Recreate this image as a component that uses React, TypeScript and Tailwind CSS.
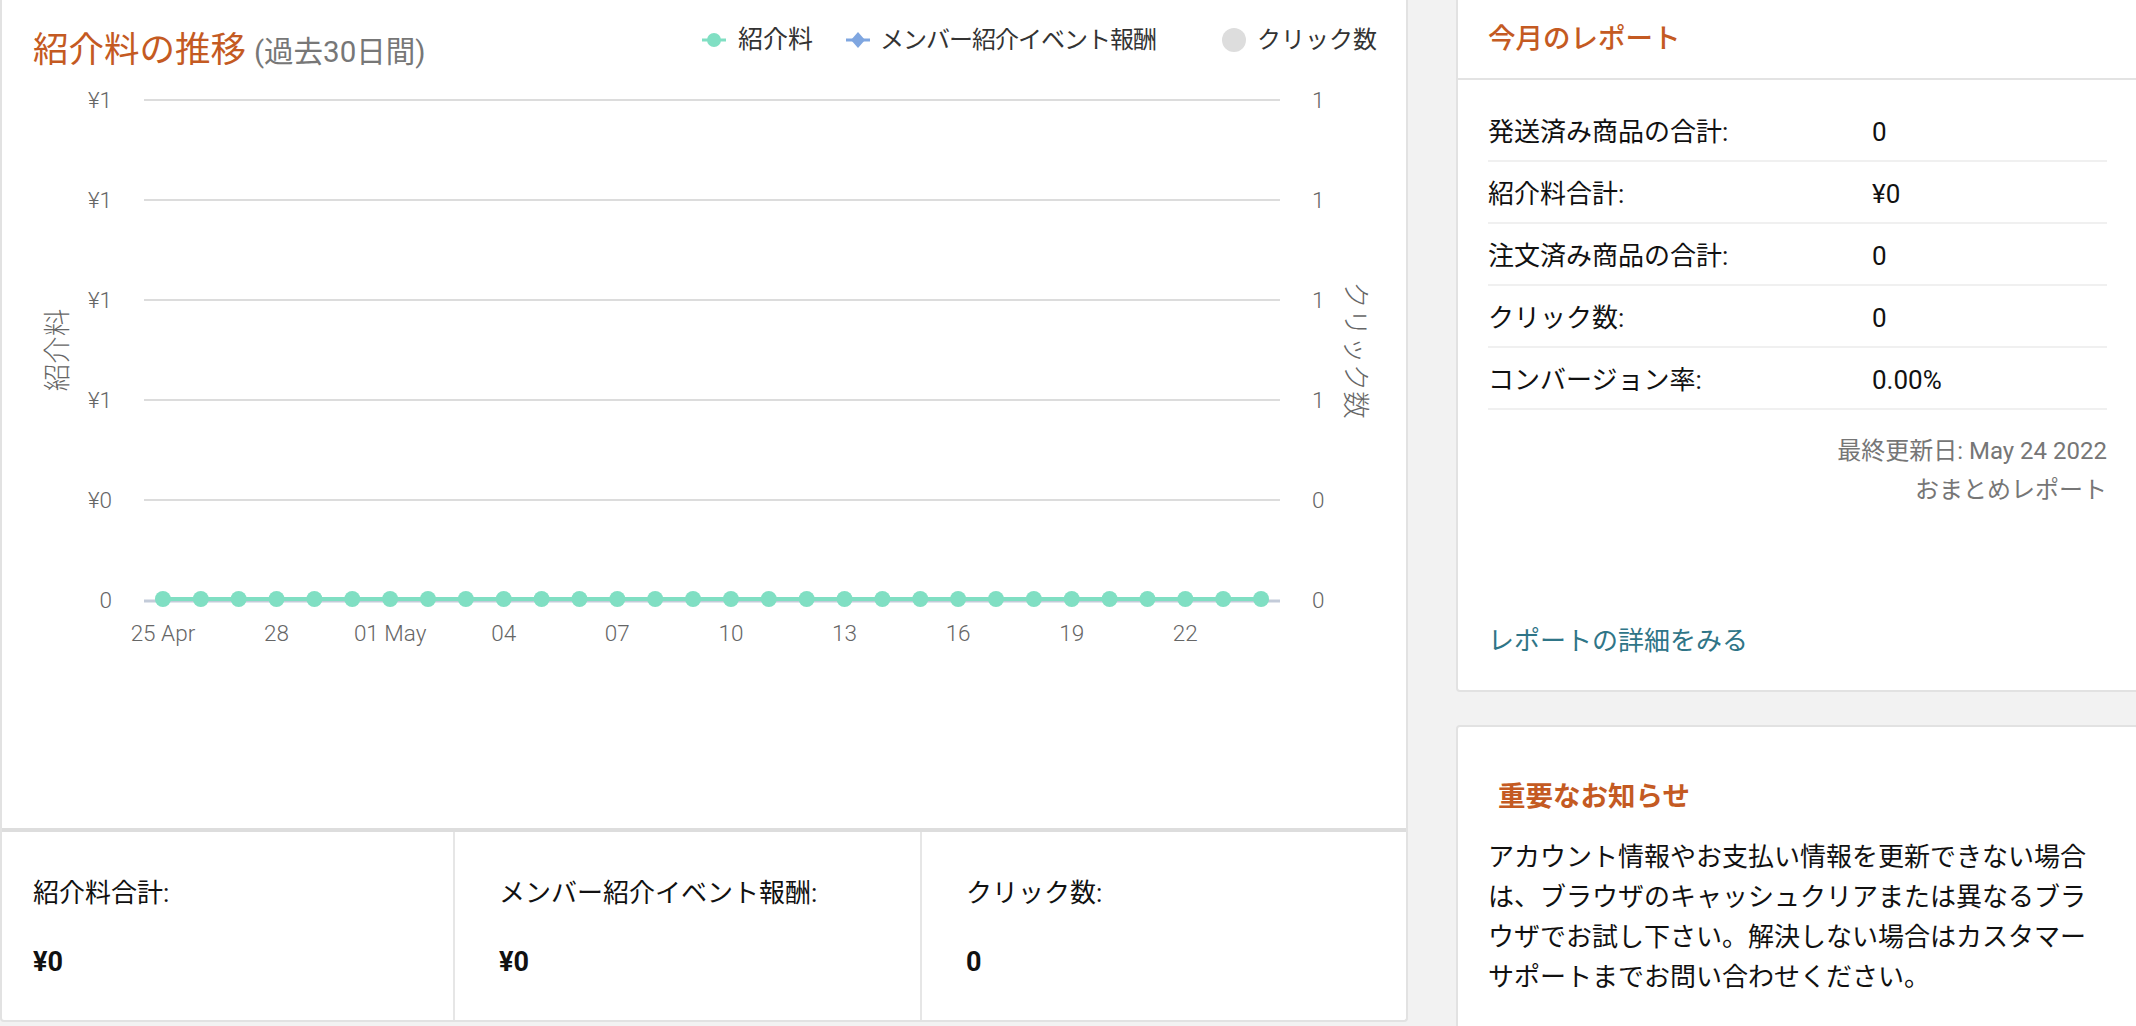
import React from "react";

const FONT = "font-['Roboto','Noto_Sans_CJK_JP',sans-serif]";

const PLOT_L = 144;
const PLOT_R = 1280;
const N = 30;
const CW = (PLOT_R - PLOT_L) / N;
const cx = (i: number) => PLOT_L + CW * (i + 0.5);

const xLabels: [number, string][] = [
  [0, "25 Apr"],
  [3, "28"],
  [6, "01 May"],
  [9, "04"],
  [12, "07"],
  [15, "10"],
  [18, "13"],
  [21, "16"],
  [24, "19"],
  [27, "22"],
];

const leftLabels: [number, string][] = [
  [100, "¥1"],
  [200, "¥1"],
  [300, "¥1"],
  [400, "¥1"],
  [500, "¥0"],
  [600, "0"],
];
const rightLabels: [number, string][] = [
  [100, "1"],
  [200, "1"],
  [300, "1"],
  [400, "1"],
  [500, "0"],
  [600, "0"],
];

function Chart() {
  const fontFamily = "Roboto, 'Noto Sans CJK JP', sans-serif";
  return (
    <svg width={1404} height={748} viewBox="2 80 1404 748" className="block">
      {[100, 200, 300, 400, 500].map((y) => (
        <line key={y} x1={PLOT_L} x2={PLOT_R} y1={y} y2={y} stroke="#dcdcdc" strokeWidth={2} />
      ))}
      <line x1={PLOT_L} x2={PLOT_R} y1={601} y2={601} stroke="#c3cbd9" strokeWidth={3} />
      {leftLabels.map(([y, t], i) => (
        <text
          key={"l" + i}
          x={112}
          y={y}
          textAnchor="end"
          dominantBaseline="central"
          fontSize={22.5}
          fontWeight={300}
          fill="#666"
          fontFamily={fontFamily}
        >
          {t}
        </text>
      ))}
      {rightLabels.map(([y, t], i) => (
        <text
          key={"r" + i}
          x={1312}
          y={y}
          textAnchor="start"
          dominantBaseline="central"
          fontSize={22.5}
          fontWeight={300}
          fill="#666"
          fontFamily={fontFamily}
        >
          {t}
        </text>
      ))}
      {xLabels.map(([i, t]) => (
        <text
          key={"x" + i}
          x={cx(i)}
          y={633}
          textAnchor="middle"
          dominantBaseline="central"
          fontSize={22.5}
          fontWeight={300}
          fill="#666"
          fontFamily={fontFamily}
        >
          {t}
        </text>
      ))}
      <text
        x={57}
        y={350}
        transform="rotate(-90 57 350)"
        textAnchor="middle"
        dominantBaseline="central"
        fontSize={27.5}
        fontWeight={300}
        fill="#666"
        fontFamily={fontFamily}
      >
        紹介料
      </text>
      <text
        x={1355}
        y={350}
        transform="rotate(90 1355 350)"
        textAnchor="middle"
        dominantBaseline="central"
        fontSize={27.5}
        fontWeight={300}
        fill="#666"
        fontFamily={fontFamily}
      >
        クリック数
      </text>
      <line x1={cx(0)} x2={cx(N - 1)} y1={599} y2={599} stroke="#80dfc3" strokeWidth={4} />
      {Array.from({ length: N }).map((_, i) => (
        <circle key={i} cx={cx(i)} cy={599} r={8} fill="#80dfc3" />
      ))}
    </svg>
  );
}

function LegendLine({ kind }: { kind: "circle" | "diamond" }) {
  const color = kind === "circle" ? "#80dfc3" : "#7fa6e0";
  return (
    <svg width={24} height={18} viewBox="0 0 24 18" className="shrink-0 block">
      <line x1={0} x2={24} y1={9} y2={9} stroke={color} strokeWidth={3} />
      {kind === "circle" ? (
        <circle cx={12} cy={9} r={7} fill={color} />
      ) : (
        <polygon points="12,1 19,9 12,17 5,9" fill={color} />
      )}
    </svg>
  );
}

export default function App() {
  const rows: [string, string][] = [
    ["発送済み商品の合計:", "0"],
    ["紹介料合計:", "¥0"],
    ["注文済み商品の合計:", "0"],
    ["クリック数:", "0"],
    ["コンバージョン率:", "0.00%"],
  ];
  return (
    <div className={`w-[2136px] h-[1026px] overflow-hidden bg-[#f2f2f2] flex items-start gap-[48px] ${FONT}`}>
      {/* Left card */}
      <div className="w-[1408px] shrink-0 h-[1022px] bg-white border-x-2 border-b-2 border-[#e2e2e2] rounded-b-[4px] flex flex-col">
        <div className="h-[80px] flex justify-between items-start pl-[31px] pr-[29px]">
          <div className="pt-[30px] leading-[40px] flex items-baseline gap-[8px]">
            <span className="text-[35.5px] text-[#c45a22]">紹介料の推移</span>
            <span className="text-[29.5px] text-[#777]">(過去30日間)</span>
          </div>
          <div className="pt-[26px] leading-[28px] flex items-center text-[24px] text-[#333]">
            <LegendLine kind="circle" />
            <span className="ml-[12px] text-[25px]">紹介料</span>
            <span className="ml-[33px]">
              <LegendLine kind="diamond" />
            </span>
            <span className="ml-[10px] tracking-[-1px]">メンバー紹介イベント報酬</span>
            <span className="ml-[66px] w-[24px] h-[24px] rounded-full bg-[#dddddd] shrink-0" />
            <span className="ml-[11px]">クリック数</span>
          </div>
        </div>
        <Chart />
        <div className="flex-1 border-t-4 border-[#dddddd] grid grid-cols-[451px_467px_1fr]">
          {[
            ["紹介料合計:", "¥0", "pl-[31px]"],
            ["メンバー紹介イベント報酬:", "¥0", "pl-[44px] border-l-2 border-[#e6e6e6]"],
            ["クリック数:", "0", "pl-[44px] border-l-2 border-[#e6e6e6]"],
          ].map(([label, value, cls]) => (
            <div key={label} className={`${cls} pt-[41px]`}>
              <div className="text-[26px] leading-[40px] text-[#111]">{label}</div>
              <div className="mt-[29px] text-[27px] leading-[40px] font-bold text-[#111]">{value}</div>
            </div>
          ))}
        </div>
      </div>

      {/* Right column */}
      <div className="w-[683px] shrink-0 flex flex-col h-[1026px]">
        <div className="h-[692px] bg-white border-x-2 border-b-2 border-[#e2e2e2] rounded-b-[4px] flex flex-col">
          <div className="h-[80px] border-b-2 border-[#e3e3e3] pl-[30px] flex items-center">
            <span className="text-[27.5px] text-[#c45a22] font-medium">今月のレポート</span>
          </div>
          <div className="pl-[30px] pt-[20px] w-[649px]">
            {rows.map(([l, v]) => (
              <div key={l} className="h-[62px] border-b-2 border-[#f0f0f0] flex items-center pt-[4px] text-[26px] text-[#111]">
                <span className="w-[384px] shrink-0">{l}</span>
                <span>{v}</span>
              </div>
            ))}
            <div className="mt-[22px] text-right text-[24px] leading-[39px] text-[#767676]">
              <div>最終更新日: May 24 2022</div>
              <div>おまとめレポート</div>
            </div>
          </div>
          <div className="mt-auto pb-[29px] pl-[30px] text-[26px] leading-[40px] text-[#2f7587]">
            レポートの詳細をみる
          </div>
        </div>
        <div className="mt-[33px] flex-1 bg-white border-x-2 border-t-2 border-[#e2e2e2] rounded-t-[4px]">
          <div className="pl-[40px] pt-[52px] text-[27.5px] leading-[36px] font-bold text-[#c45a22]">
            重要なお知らせ
          </div>
          <p className="ml-[30px] mt-[22px] w-[619px] text-[26px] leading-[40px] text-[#111]">
            アカウント情報やお支払い情報を更新できない場合は、ブラウザのキャッシュクリアまたは異なるブラウザでお試し下さい。解決しない場合はカスタマーサポートまでお問い合わせください。
          </p>
        </div>
      </div>
    </div>
  );
}
